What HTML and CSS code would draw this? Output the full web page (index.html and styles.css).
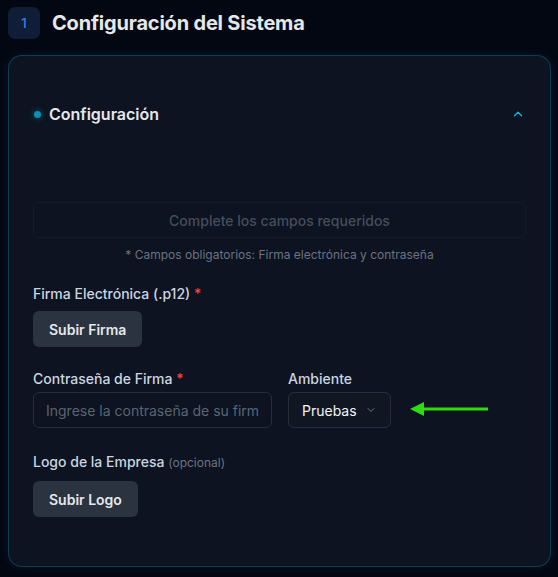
FILE: index.html
```html
<!DOCTYPE html>
<html lang="es">
<head>
    <meta charset="UTF-8">
    <meta name="viewport" content="width=device-width, initial-scale=1.0">
    <title>Configuración del Sistema</title>
    <link rel="stylesheet" href="styles.css">
</head>
<body>

    <div class="step-header">
        <div class="step-badge">1</div>
        <h1 class="step-title">Configuración del Sistema</h1>
    </div>

    <div class="card">
        <div class="section-head">
            <div class="section-name">
                <span class="dot"></span>
                <span>Configuración</span>
            </div>
            <svg class="chevron" width="14" height="14" viewBox="0 0 24 24" fill="none" stroke="currentColor" stroke-width="2.5" stroke-linecap="round" stroke-linejoin="round">
                <polyline points="18 15 12 9 6 15"></polyline>
            </svg>
        </div>

        <div class="status-box">Complete los campos requeridos</div>
        <p class="note">* Campos obligatorios: Firma electrónica y contraseña</p>

        <div class="field">
            <label class="label">Firma Electrónica (.p12) <span class="req">*</span></label>
            <button class="btn">Subir Firma</button>
        </div>

        <div class="row">
            <div class="field">
                <label class="label">Contraseña de Firma <span class="req">*</span></label>
                <input type="password" class="input" placeholder="Ingrese la contraseña de su firma">
            </div>
            <div class="field">
                <label class="label">Ambiente</label>
                <div class="select">
                    <span>Pruebas</span>
                    <svg width="12" height="12" viewBox="0 0 24 24" fill="none" stroke="currentColor" stroke-width="2" stroke-linecap="round" stroke-linejoin="round">
                        <polyline points="6 9 12 15 18 9"></polyline>
                    </svg>
                </div>
            </div>
            <!-- pointer to the environment selector -->
            <svg class="arrow" width="80" height="14" viewBox="0 0 80 14">
                <line x1="10" y1="7" x2="78" y2="7" stroke="#2ddc0c" stroke-width="3"/>
                <polygon points="0,7 14,0 14,14" fill="#2ddc0c"/>
            </svg>
        </div>

        <div class="field field-logo">
            <label class="label">Logo de la Empresa <span class="optional">(opcional)</span></label>
            <button class="btn">Subir Logo</button>
        </div>
    </div>

</body>
</html>
```

FILE: styles.css
```css
body {
    font-family: 'Inter', 'Liberation Sans', sans-serif;
    background-color: #030712;
    color: #d1d5db;
    margin: 0;
    padding: 7px 7px 10px 8px;
}

/* Step header */
.step-header {
    display: flex;
    align-items: center;
    gap: 12px;
}

.step-badge {
    width: 32px;
    height: 32px;
    border-radius: 7px;
    background-color: #0f1d36;
    color: #3b82f6;
    font-size: 13px;
    font-weight: 500;
    display: flex;
    align-items: center;
    justify-content: center;
}

.step-title {
    margin: 0;
    font-size: 20px;
    font-weight: 700;
    color: #e5e7eb;
    letter-spacing: -0.2px;
}

/* Card */
.card {
    margin-top: 16px;
    background-color: #0d1320;
    border: 1px solid rgba(14, 116, 144, 0.45);
    border-radius: 14px;
    padding: 40px 24px 49px 24px;
    box-shadow: 0 0 12px rgba(8, 145, 178, 0.12);
}

.section-head {
    display: flex;
    justify-content: space-between;
    align-items: center;
    height: 36px;
}

.section-name {
    display: flex;
    align-items: center;
    gap: 8px;
    font-size: 16px;
    font-weight: 600;
    color: #e5e7eb;
}

.dot {
    width: 7px;
    height: 7px;
    border-radius: 50%;
    background-color: #0891b2;
    box-shadow: 0 0 6px rgba(8, 145, 178, 0.6);
    margin-left: 1px;
}

.chevron {
    color: #06b6d4;
    margin-right: 1px;
}

.status-box {
    margin-top: 70px;
    height: 34px;
    border: 1px solid #151c29;
    border-radius: 6px;
    display: flex;
    align-items: center;
    justify-content: center;
    font-size: 14px;
    font-weight: 500;
    color: #454e5d;
}

.note {
    margin: 9px 0 0 0;
    text-align: center;
    font-size: 12px;
    color: #6b7280;
}

.field {
    display: flex;
    flex-direction: column;
    align-items: flex-start;
    margin-top: 23px;
}

.field-logo {
    margin-top: 25px;
}

.field-logo .label {
    margin-bottom: 11px;
}

.label {
    font-size: 14px;
    font-weight: 500;
    color: #cbd5e1;
    margin-bottom: 9px;
}

.row .label {
    margin-bottom: 5px;
}

.req {
    color: #ef4444;
}

.optional {
    font-size: 12px;
    font-weight: 400;
    color: #6b7280;
}

.btn {
    font-family: inherit;
    height: 36px;
    padding: 0 16px;
    background-color: #2b3340;
    color: #e5e7eb;
    border: none;
    border-radius: 6px;
    font-size: 14px;
    font-weight: 600;
}

.row {
    display: flex;
    align-items: flex-end;
    gap: 16px;
}

.input {
    font-family: inherit;
    box-sizing: border-box;
    width: 239px;
    height: 36px;
    padding: 0 12px;
    background-color: #0d1320;
    border: 1px solid #262e3b;
    border-radius: 6px;
    font-size: 14px;
    color: #e5e7eb;
}

.input::placeholder {
    color: #5b6472;
}

.select {
    box-sizing: border-box;
    width: 103px;
    height: 36px;
    padding: 0 13px;
    display: flex;
    align-items: center;
    justify-content: space-between;
    border: 1px solid #262e3b;
    border-radius: 6px;
    background-color: #111722;
    font-size: 14px;
    color: #f3f4f6;
}

.select svg {
    color: #6b7280;
}

.arrow {
    margin-left: 3px;
    margin-bottom: 12px;
}
```
